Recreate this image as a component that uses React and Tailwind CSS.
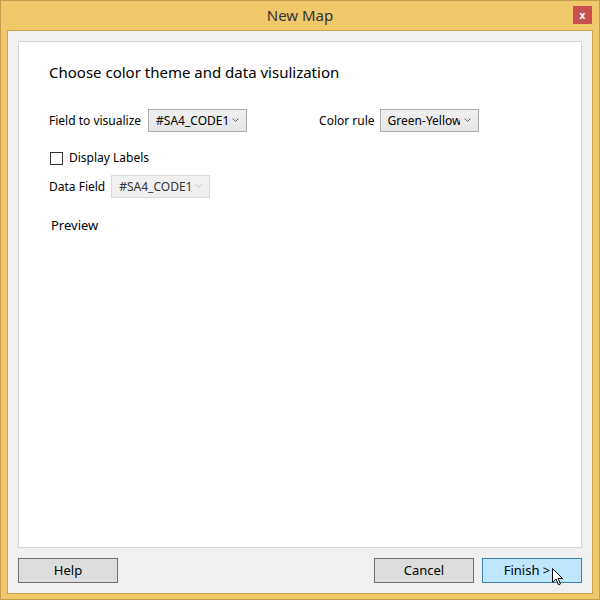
const FONT = { fontFamily: '"Segoe UI", "Noto Sans", "Open Sans", sans-serif' };

const Chevron = ({ color = '#606060' }) => (
  <svg width="7" height="5" viewBox="0 0 7 5" className="shrink-0">
    <path d="M0.5 0.5 L3.5 3.5 L6.5 0.5" fill="none" stroke={color} strokeWidth="1" />
  </svg>
);

const Select = ({ value, disabled }) => (
  <div
    className={`flex h-[23px] w-[99px] items-center justify-between border pl-[7px] pr-[7px] text-[12px] ${
      disabled
        ? 'border-[#d9d9d9] bg-[#f0f0f0] text-[#333]'
        : 'border-[#acacac] bg-gradient-to-b from-[#f0f0f0] to-[#e5e5e5] text-black'
    }`}
  >
    <span className="w-[72px] overflow-hidden whitespace-nowrap">{value}</span>
    <Chevron color={disabled ? '#c0c0c0' : '#606060'} />
  </div>
);

const Button = ({ children, primary }) => (
  <div
    className={`flex h-[25px] w-[100px] items-center justify-center border text-[13px] text-black ${
      primary ? 'border-[#3c7fb1] bg-[#bee6fd] pr-[10px]' : 'border-[#707070] bg-[#dddddd]'
    }`}
  >
    {children}
  </div>
);

// mouse pointer resting on the Finish button
const Cursor = () => (
  <svg width="12" height="18" viewBox="0 0 12 18" className="absolute left-[70px] top-[10px]">
    <path
      d="M0.5 0.5 L0.5 14.5 L4 11 L6.5 16.8 L8.5 15.9 L6 10.5 L10.5 10.5 Z"
      fill="white"
      stroke="black"
      strokeWidth="1"
    />
  </svg>
);

export default function App() {
  return (
    <div
      className="flex h-[600px] w-[600px] flex-col border border-[#c49d4c] bg-[#f0c86a] px-[6px] pb-[5px]"
      style={FONT}
    >
      {/* title bar */}
      <div className="relative flex h-[29px] shrink-0 items-center justify-center">
        <span className="text-[15px] text-[#333]">New Map</span>
        <div className="absolute right-[1px] top-[5px] flex h-[18px] w-[19px] items-center justify-center bg-[#c75050]">
          <span className="text-[10px] font-bold leading-none text-white">x</span>
        </div>
      </div>

      {/* client area */}
      <div className="flex flex-1 flex-col border border-[#c9a24f] bg-[#f0f0f0] px-[10px] pb-[10px] pt-[10px]">
        <div className="flex-1 border border-[#d5d5d5] bg-white pl-[30px] pt-[20px]">
          <h1 className="text-[15px] leading-[20px] text-black">Choose color theme and data visulization</h1>

          <div className="mt-[27px] flex items-center text-[12px] text-black">
            <span className="mr-[7px]">Field to visualize</span>
            <Select value="#SA4_CODE11" />
            <span className="ml-[72px] mr-[5px]">Color rule</span>
            <Select value="Green-Yellow-Red" />
          </div>

          <div className="mt-[17px] flex items-center text-[12px] text-black">
            <div className="ml-[1px] h-[13px] w-[13px] border border-[#333] bg-white" />
            <span className="ml-[6px]">Display Labels</span>
          </div>

          <div className="mt-[8px] flex items-center text-[12px] text-black">
            <span className="mr-[6px]">Data Field</span>
            <Select value="#SA4_CODE11" disabled />
          </div>

          <div className="ml-[2px] mt-[18px] text-[13px] text-black">Preview</div>
        </div>

        <div className="mt-[10px] flex items-center">
          <Button>Help</Button>
          <div className="flex-1" />
          <Button>Cancel</Button>
          <div className="relative ml-[8px]">
            <Button primary>Finish &gt;</Button>
            <Cursor />
          </div>
        </div>
      </div>
    </div>
  );
}
